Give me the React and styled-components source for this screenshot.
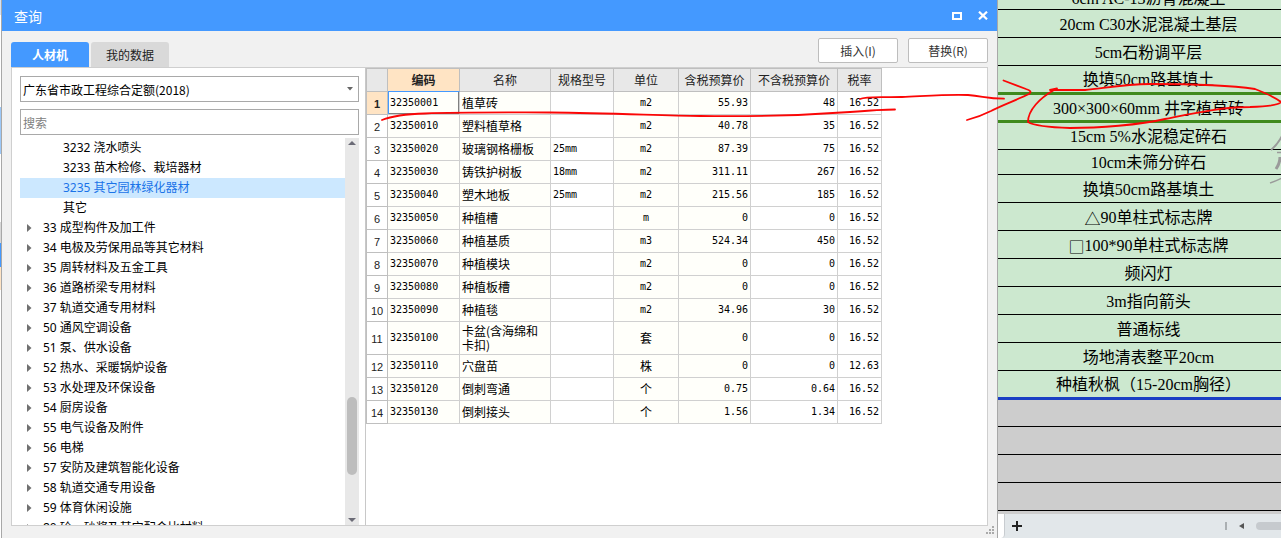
// App.jsx 查询窗口
import React, { useState } from "react";
import styled, { createGlobalStyle } from "styled-components";

const tree = [
  { label: "3232 浇水喷头", child: true },
  { label: "3233 苗木检修、栽培器材", child: true },
  { label: "3235 其它园林绿化器材", child: true },
  { label: "其它", child: true },
  { label: "33 成型构件及加工件" },
  { label: "34 电极及劳保用品等其它材料" },
  { label: "35 周转材料及五金工具" },
  { label: "36 道路桥梁专用材料" },
  { label: "37 轨道交通专用材料" },
  { label: "50 通风空调设备" },
  { label: "51 泵、供水设备" },
  { label: "52 热水、采暖锅炉设备" },
  { label: "53 水处理及环保设备" },
  { label: "54 厨房设备" },
  { label: "55 电气设备及附件" },
  { label: "56 电梯" },
  { label: "57 安防及建筑智能化设备" },
  { label: "58 轨道交通专用设备" },
  { label: "59 体育休闲设施" },
  { label: "80 砼、砂浆及其它配合比材料" },
];

const materials = [
  ["32350001", "植草砖", "", "m2", "55.93", "48", "16.52"],
  ["32350010", "塑料植草格", "", "m2", "40.78", "35", "16.52"],
  ["32350020", "玻璃钢格栅板", "25mm", "m2", "87.39", "75", "16.52"],
  ["32350030", "铸铁护树板", "18mm", "m2", "311.11", "267", "16.52"],
  ["32350040", "塑木地板", "25mm", "m2", "215.56", "185", "16.52"],
  ["32350050", "种植槽", "", "m", "0", "0", "16.52"],
  ["32350060", "种植基质", "", "m3", "524.34", "450", "16.52"],
  ["32350070", "种植模块", "", "m2", "0", "0", "16.52"],
  ["32350080", "种植板槽", "", "m2", "0", "0", "16.52"],
  ["32350090", "种植毯", "", "m2", "34.96", "30", "16.52"],
  ["32350100", "卡盆(含海绵和卡扣)", "", "套", "0", "0", "16.52"],
  ["32350110", "穴盘苗", "", "株", "0", "0", "12.63"],
  ["32350120", "倒刺弯通", "", "个", "0.75", "0.64", "16.52"],
  ["32350130", "倒刺接头", "", "个", "1.56", "1.34", "16.52"],
];

const columns = [
  { title: "编码", width: 72, tint: true },
  { title: "名称", width: 91, tint: true },
  { title: "规格型号", width: 63 },
  { title: "单位", width: 65, align: "center", tint: true },
  { title: "含税预算价", width: 72, align: "right", tint: true },
  { title: "不含税预算价", width: 87, align: "right" },
  { title: "税率", width: 44, align: "right" },
];

const sheetRows = [
  { text: "6cm AC-13沥青混凝土", height: 10 },
  { text: "20cm C30水泥混凝土基层" },
  { text: "5cm石粉调平层" },
  { text: "换填50cm路基填土", height: 29, line: "#3f8a1d" },
  { text: "300×300×60mm 井字植草砖", line: "#3f8a1d" },
  { text: "15cm 5%水泥稳定碎石", height: 27 },
  { text: "10cm未筛分碎石", height: 25 },
  { text: "换填50cm路基填土" },
  { symbol: "△", text: "90单柱式标志牌" },
  { symbol: "□", text: "100*90单柱式标志牌" },
  { text: "频闪灯" },
  { text: "3m指向箭头" },
  { text: "普通标线" },
  { text: "场地清表整平20cm" },
  { text: "种植秋枫（15-20cm胸径）", height: 29, line: "#1a3fc4" },
  { text: "", height: 27, empty: true },
  { text: "", empty: true },
  { text: "", empty: true },
  { text: "", empty: true },
];

// 纯数字/英文用等宽字体
const isAscii = (text) => /^[\w.]+$/.test(text);

function App() {
  const [tab, setTab] = useState(0);
  const [node, setNode] = useState(2);

  return (
    <>
      <GlobalStyle />
      <Page>
        <Behind />
        <Dialog>
          <TitleBar>
            <Title>查询</Title>
            <WindowButton aria-label="最大化">
              <svg width="10" height="8" viewBox="0 0 10 8">
                <path d="M1 1h8v6H1z" fill="none" stroke="#fff" strokeWidth="2" />
              </svg>
            </WindowButton>
            <WindowButton aria-label="关闭">
              <svg width="10" height="9" viewBox="0 0 10 9">
                <path d="M1 .7l8 7.6M9 .7l-8 7.6" stroke="#fff" strokeWidth="2.2" />
              </svg>
            </WindowButton>
          </TitleBar>

          <Toolbar>
            <Tab $active={tab === 0} onClick={() => setTab(0)}>人材机</Tab>
            <Tab $active={tab === 1} onClick={() => setTab(1)}>我的数据</Tab>
            <Spacer />
            <Action>插入(I)</Action>
            <Action>替换(R)</Action>
          </Toolbar>

          <Content>
            <Side>
              <SelectWrap>
                <Select aria-label="定额">
                  <option>广东省市政工程综合定额(2018)</option>
                </Select>
                <Caret viewBox="0 0 6 4">
                  <path d="M0 0h6L3 3.5z" fill="#666" />
                </Caret>
              </SelectWrap>
              <Search aria-label="搜索" placeholder="搜索" />
              <TreeBox>
                <Tree>
                  {tree.map((item, i) => (
                    <TreeRow
                      key={item.label}
                      $child={item.child}
                      $active={node === i}
                      onClick={() => setNode(i)}
                    >
                      {!item.child && (
                        <svg width="16" height="10" viewBox="0 0 16 10">
                          <path d="M0 1v8L4.500 5z" fill="#707070" />
                        </svg>
                      )}
                      {item.label}
                    </TreeRow>
                  ))}
                </Tree>
                <ScrollBar>
                  <svg width="8" height="4" viewBox="0 0 8 4">
                    <path d="M0 4h8L4 0z" fill="#6b6b76" />
                  </svg>
                  <Track>
                    <Thumb />
                  </Track>
                  <svg width="8" height="4" viewBox="0 0 8 4">
                    <path d="M0 0h8L4 4z" fill="#6b6b76" />
                  </svg>
                </ScrollBar>
              </TreeBox>
            </Side>

            <Main>
              <Table>
                <colgroup>
                  <Col $w={22} />
                  {columns.map((c) => <Col key={c.title} $w={c.width} />)}
                </colgroup>
                <thead>
                  <tr>
                    <Head aria-label="序号" />
                    {columns.map((c, i) => (
                      <Head key={c.title} scope="col" $active={i === 0}>{c.title}</Head>
                    ))}
                  </tr>
                </thead>
                <tbody>
                  {materials.map((row, r) => (
                    <Row key={row[0]} $tall={row[1].length > 7}>
                      <Index scope="row" $active={r === 0}>{r + 1}</Index>
                      {row.map((value, i) => (
                        <Cell
                          key={i}
                          $align={columns[i].align}
                          $tint={columns[i].tint}
                          $mono={isAscii(value)}
                          $focus={r === 0 && i === 0}
                        >
                          {value}
                        </Cell>
                      ))}
                    </Row>
                  ))}
                </tbody>
              </Table>
            </Main>
          </Content>
          <Bottom>
            <svg width="9" height="9" viewBox="0 0 9 9">
              <path d="M6 0h2v2H6zM3 3h2v2H3zM6 3h2v2H6zM0 6h2v2H0zM3 6h2v2H3zM6 6h2v2H6z" fill="#aaa" />
            </svg>
          </Bottom>
        </Dialog>

        <Sheet>
          <SheetBody>
            {sheetRows.map((row, i) => (
              <SheetRow key={i} $h={row.height} $line={row.line} $empty={row.empty}>
                {row.symbol && <Symbol>{row.symbol}</Symbol>}
                {row.text}
              </SheetRow>
            ))}
          </SheetBody>
          <SheetBar>
            <SheetTab />
            <AddButton aria-label="新建工作表">
              <svg width="10" height="10" viewBox="0 0 10 10">
                <path d="M5 0v10M0 5h10" stroke="#222" strokeWidth="2" />
              </svg>
            </AddButton>
            <Spacer />
            <Divider />
            <svg width="5" height="6" viewBox="0 0 5 6">
              <path d="M5 0v6L0 3z" fill="#555" />
            </svg>
            <HThumb />
          </SheetBar>
        </Sheet>

        {/* 水印和红色手写标注 */}
        <Marks viewBox="0 0 1281 538" preserveAspectRatio="none">
          <g fill="none" stroke="#9a9a9a">
            <path d="M1282 136q-4 8-11 14" strokeWidth="2" />
            <path d="M1277 152.500h5M1270 183q6-2 12-5" strokeWidth="1.500" />
            <path d="M1280 157q0 6-4 12" strokeWidth="3" />
          </g>
          <g fill="none" stroke="#fb0606" strokeWidth="1.800" strokeLinecap="round" strokeLinejoin="round">
            <path d="M382 120C392 116 408 114 425 113.500C460 112 510 112.500 550 112.500C610 113 660 115.500 700 116C765 117 815 114.500 850 112C875 110 885 109.500 895 109.500" />
            <path d="M860 99C866 96 880 97.500 902 97C925 96 950 94 968 95C983 96 986 98.500 1004 98.700" />
            <path d="M1003.500 80.500L1026 89Q1033 91 1029 94C1019 99 1000 106 991 111C983 115 975 118 967 120" />
            <path d="M1057 88.500L1050 90H1085C1105 88 1125 84 1150 84C1190 84 1235 86 1255 89C1268 94 1276 98 1281 102Q1279 106 1250 107C1220 107 1190 114 1165 119C1140 125 1098 128 1070 128Q1036 127 1028 122C1028 110 1040 98 1054 90" />
          </g>
        </Marks>
      </Page>
    </>
  );
}

const GlobalStyle = createGlobalStyle`
* {
  box-sizing: border-box;
}

body {
  margin: 0;
  font-family: "Noto Sans CJK SC", sans-serif;
  font-size: 12px;
  color: #000;
}

button, input, select {
  font: inherit;
  margin: 0;
}
`;

const Page = styled.div`
position: relative;
display: flex;
height: 100vh;
overflow: hidden;
background: #fff;
`;

// 被遮住的窗口边缘
const Behind = styled.div`
flex: 0 0 1px;
background: linear-gradient(#d4e2f5 15px, #fff 15px 107px, #9cc8f8 107px 154px, #fff 154px 222px, #d8d8d8 222px 243px, #4499ff 243px 267px, #ffe4c4 267px 290px, #fff 290px);
`;

const Dialog = styled.section`
flex: 1;
min-width: 0;
display: flex;
flex-direction: column;
background: #f1f1f1;
border: solid #a8a8a8;
border-width: 0 1px;
`;

const TitleBar = styled.header`
display: flex;
align-items: center;
gap: 4px;
height: 31px;
flex: none;
padding: 0 3px 0 12px;
background: #4499ff;
color: #fff;
`;

const Title = styled.h1`
flex: 1;
margin: 0;
font-size: 14px;
font-weight: 400;
`;

const WindowButton = styled.button`
display: flex;
align-items: center;
justify-content: center;
width: 22px;
height: 22px;
padding: 0;
border: 0;
background: transparent;
`;

const Toolbar = styled.div`
display: flex;
align-items: flex-end;
height: 36px;
flex: none;
padding: 0 9px;
`;

const Tab = styled.button`
width: 78px;
height: 25px;
margin-right: 2px;
padding: 0;
border: 0;
border-radius: 3px 3px 0 0;
background: ${(p) => (p.$active ? "#4499ff" : "#d9d9d9")};
color: ${(p) => (p.$active ? "#fff" : "#222")};
font-weight: ${(p) => (p.$active ? 700 : 400)};
`;

const Spacer = styled.div`
flex: 1;
`;

const Action = styled.button`
align-self: flex-start;
width: 80px;
height: 25px;
margin-top: 7px;
margin-left: 10px;
padding: 0;
border: 1px solid #bdbdbd;
border-radius: 2px;
background: #fff;
color: #333;
`;

const Content = styled.div`
flex: 1;
min-height: 0;
display: flex;
margin: 0 9px;
border: 1px solid #cfcfcf;
background: #fff;
`;

const Side = styled.aside`
flex: 0 0 354px;
display: flex;
flex-direction: column;
padding: 8px 6px 0 8px;
border-right: 1px solid #c8c8c8;
`;

const SelectWrap = styled.div`
display: flex;
align-items: center;
flex: none;
height: 26px;
border: 1px solid #a9a9a9;
padding-right: 5px;
`;

const Select = styled.select`
flex: 1;
height: 24px;
padding: 0 2px;
border: 0;
appearance: none;
background: transparent;
color: #000;
`;

const Caret = styled.svg`
width: 6px;
height: 4px;
`;

const Search = styled.input`
flex: none;
height: 26px;
margin-top: 7px;
padding: 0 2px;
border: 1px solid #a9a9a9;

&::placeholder {
  color: #808080;
}
`;

const TreeBox = styled.div`
flex: 1;
min-height: 0;
display: flex;
margin-top: 3px;
`;

const Tree = styled.ul`
flex: 1;
margin: 0;
padding: 0;
overflow: hidden;
list-style: none;
font-family: "Noto Sans", "Noto Sans CJK SC", sans-serif;
`;

const TreeRow = styled.li`
display: flex;
align-items: center;
height: 20px;
padding-left: ${(p) => (p.$child ? 43 : 7)}px;
background: ${(p) => (p.$active ? "#cce8ff" : "transparent")};
color: ${(p) => (p.$active ? "#1a73e8" : "#000")};
line-height: 20px;
`;

const ScrollBar = styled.div`
display: flex;
flex-direction: column;
align-items: center;
width: 14px;
padding: 3px 0;
background: #e8e8e8;
`;

const Track = styled.div`
flex: 1;
display: flex;
flex-direction: column;
justify-content: flex-end;
padding-bottom: 43px;
`;

const Thumb = styled.div`
width: 10px;
height: 78px;
border-radius: 5px;
background: #bdbdbd;
`;

const Main = styled.main`
flex: 1;
min-width: 0;
overflow: hidden;
`;

const Table = styled.table`
width: 516px;
table-layout: fixed;
border-collapse: separate;
border-spacing: 0;
line-height: 14px;
`;

const Col = styled.col`
width: ${(p) => p.$w}px;
`;

const Head = styled.th`
height: 24px;
padding: 0;
border: solid #bfbfbf;
border-width: 1px 1px 1px 0;
border-bottom-color: ${(p) => (p.$active ? "#4499ff" : "#bfbfbf")};
background: ${(p) => (p.$active ? "#ffe4c4" : "#e8e8e8")};
color: #222;
font-weight: ${(p) => (p.$active ? 700 : 400)};

&:first-child {
  border-left-width: 1px;
}
`;

const Row = styled.tr`
height: ${(p) => (p.$tall ? 33 : 23)}px;
`;

const Index = styled.th`
padding: 2px 0 0;
border: solid #bfbfbf;
border-width: 0 1px 1px;
background: ${(p) => (p.$active ? "#ffe4c4" : "#fff")};
color: #222;
font-family: "Liberation Sans", sans-serif;
font-size: 11px;
font-weight: ${(p) => (p.$active ? 700 : 400)};
`;

const Cell = styled.td`
padding: 0 2px;
border: solid #d0d0d0;
border-width: 0 1px 1px 0;
background: ${(p) => (p.$tint ? "#fffffa" : "#fff")};
box-shadow: ${(p) => (p.$focus ? "inset 1px 0 #4499ff, inset -1px -1px #808080" : "none")};
font-family: ${(p) => (p.$mono ? `"DejaVu Sans Mono", monospace` : `"Noto Sans CJK SC", sans-serif`)};
font-size: ${(p) => (p.$mono ? 10 : 12)}px;
text-align: ${(p) => p.$align || "left"};
`;

const Bottom = styled.footer`
display: flex;
justify-content: flex-end;
flex: none;
height: 12px;
padding-right: 2px;
`;

const Sheet = styled.section`
flex: 0 0 283px;
display: flex;
flex-direction: column;
background: #cdcdcd;
`;

const SheetBody = styled.div`
flex: 1;
min-height: 0;
overflow: hidden;
`;

const SheetRow = styled.div`
display: flex;
align-items: ${(p) => (p.$h === 10 ? "flex-end" : "center")};
justify-content: center;
height: ${(p) => p.$h || 28}px;
padding-top: 2px;
padding-left: 18px;
border-bottom: ${(p) => (p.$line ? `3px solid ${p.$line}` : "1px solid #000")};
background: ${(p) => (p.$empty ? "#cdcdcd" : "#cce8cf")};
font-family: "Liberation Serif", "Noto Sans CJK SC", serif;
font-size: 16px;
line-height: 20px;
white-space: pre;
`;

const Symbol = styled.span`
font-family: "Noto Sans CJK SC", sans-serif;
`;

const SheetBar = styled.div`
display: flex;
align-items: center;
gap: 12px;
height: 24px;
flex: none;
background: #e2e7ea;
`;

const SheetTab = styled.div`
align-self: stretch;
width: 7px;
margin-right: -5px;
border-right: 1px solid #c8ccd0;
border-radius: 0 0 4px 0;
background: #fff;
`;

const AddButton = styled.button`
display: flex;
padding: 0;
border: 0;
background: transparent;
`;

const Divider = styled.div`
width: 2px;
height: 8px;
background: #aaafb2;
`;

const HThumb = styled.div`
width: 25px;
height: 8px;
border-radius: 4px 0 0 4px;
background: #c6cace;
`;

const Marks = styled.svg`
position: absolute;
inset: 0;
width: 100%;
height: 100%;
pointer-events: none;
`;

export default App;
